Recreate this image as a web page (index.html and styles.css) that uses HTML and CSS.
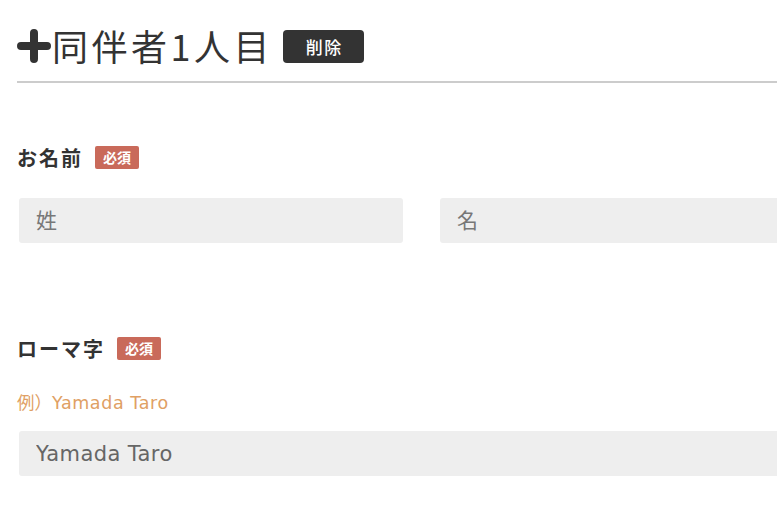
FILE: index.html
```html
<!DOCTYPE html>
<html lang="ja">
<head>
<meta charset="utf-8">
<link rel="stylesheet" href="styles.css">
</head>
<body>
<div class="page">
  <div class="head">
    <svg class="plus" width="34" height="34" viewBox="0 0 34 34"><path d="M17 4V30M4 17H30" stroke="#333" stroke-width="8" stroke-linecap="round" fill="none"/></svg>
    <h2 class="title">同伴者1人目</h2>
    <button class="del">削除</button>
  </div>
  <div class="rule"></div>

  <div class="field f-name">
    <div class="label">お名前<span class="req">必須</span></div>
    <div class="row">
      <input class="inp half" placeholder="姓">
      <input class="inp half2" placeholder="名">
    </div>
  </div>

  <div class="field f-roma">
    <div class="label">ローマ字<span class="req">必須</span></div>
    <div class="ex"><span class="exj">例）</span>Yamada Taro</div>
    <input class="inp full" placeholder="Yamada Taro">
  </div>
</div>
</body>
</html>
```
FILE: styles.css
```css
html, body { margin: 0; padding: 0; background: #fff; overflow: hidden; }
body { font-family: "DejaVu Sans", "Noto Sans CJK JP", sans-serif; color: #333; }
.page { padding-left: 17px; width: 800px; }
.head { display: flex; align-items: center; height: 60px; padding-top: 16px; }
.plus { display: block; flex-shrink: 0; }
.title { font-family: "Noto Sans CJK JP", sans-serif; font-weight: 400; font-size: 36px; letter-spacing: 3.5px; margin: -2px 0 0 1px; line-height: 1; color: #333; }
.del { margin-left: 10px; width: 81px; height: 33px; background: #333; color: #fff; border: 0; border-radius: 4px; font-family: "Noto Sans CJK JP", sans-serif; font-size: 17px; font-weight: 500; letter-spacing: 1.5px; padding: 0 0 0 1.5px; flex-shrink: 0; }
.rule { height: 2px; background: #ccc; margin-top: 5px; }
.f-name { padding-top: 62px; }
.f-roma { padding-top: 93px; }
.label { display: flex; align-items: center; font-family: "Noto Sans CJK JP", sans-serif; font-weight: 700; font-size: 20px; letter-spacing: 2px; height: 24px; color: #333; }
.req { margin-left: 12px; background: #c96a5a; color: #fff; font-size: 14px; font-weight: 700; letter-spacing: 0; border-radius: 2px; padding: 0 8px; height: 23px; line-height: 23px; }
.row { display: flex; gap: 37px; margin-top: 29px; }
.inp { box-sizing: border-box; flex-shrink: 0; height: 45px; background: #eee; border: 0; border-radius: 3px; margin-left: 2px; padding: 0 17px; font-family: "DejaVu Sans", "Noto Sans CJK JP", sans-serif; font-size: 21px; letter-spacing: 0.4px; color: #666; outline: none; }
.inp::placeholder { color: #777; }
.full::placeholder { color: #666; }
.half { width: 384px; }
.half2 { width: 400px; margin-left: 0; }
.ex { margin-top: 33px; font-size: 17.5px; letter-spacing: 0.6px; color: #e0a064; height: 20px; line-height: 20px; }
.exj { letter-spacing: 0; }
.full { width: 800px; margin-top: 18px; display: block; }
```
